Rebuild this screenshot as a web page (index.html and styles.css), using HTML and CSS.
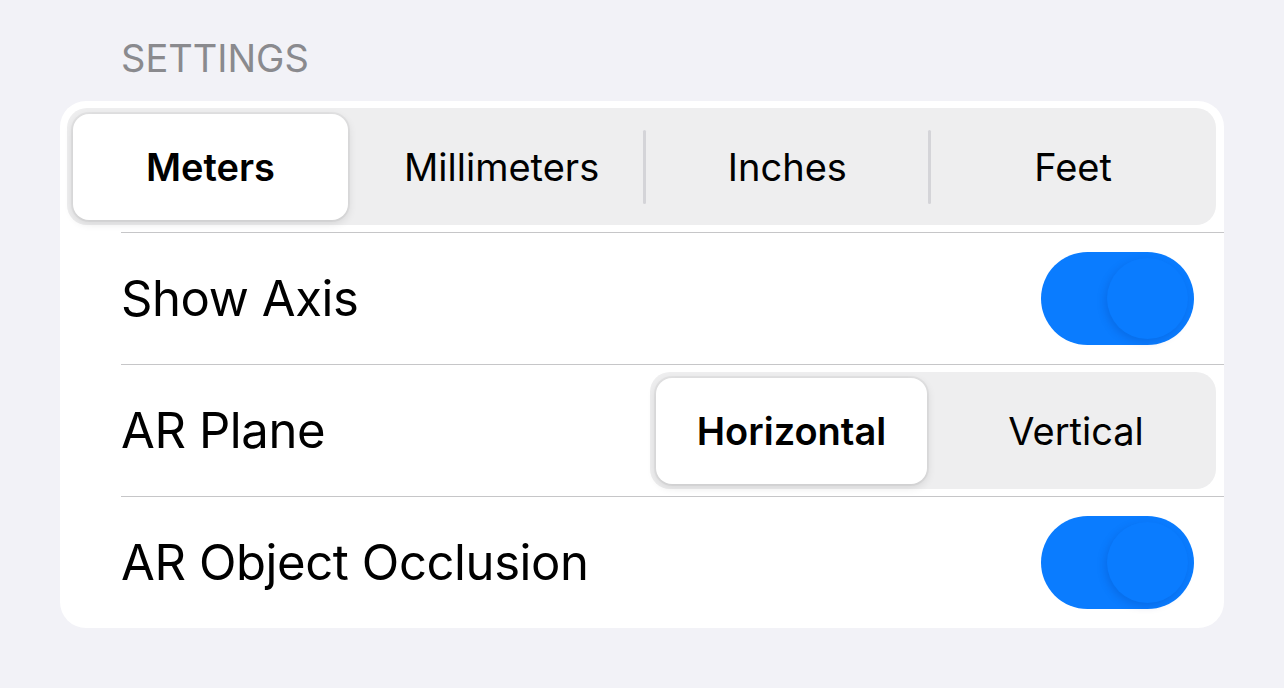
FILE: index.html
```html
<!DOCTYPE html>
<html>
  <head>
    <meta charset="UTF-8" />
    <title>Settings</title>
    <link rel="stylesheet" href="styles.css">
  </head>
  <body>
    <div class="page">
      <div class="section-title">SETTINGS</div>
      <div class="card">
        <div class="row row-segment">
          <div class="segmented units">
            <div class="segment selected">Meters</div>
            <div class="segment">Millimeters</div>
            <div class="segment divided">Inches</div>
            <div class="segment divided">Feet</div>
          </div>
        </div>
        <div class="row">
          <div class="label">Show Axis</div>
          <div class="toggle"><div class="knob"></div></div>
        </div>
        <div class="row">
          <div class="label">AR Plane</div>
          <div class="segmented plane">
            <div class="segment selected">Horizontal</div>
            <div class="segment">Vertical</div>
          </div>
        </div>
        <div class="row">
          <div class="label">AR Object Occlusion</div>
          <div class="toggle"><div class="knob"></div></div>
        </div>
      </div>
    </div>
  </body>
</html>
```

FILE: styles.css
```css
body {
  margin: 0;
  background-color: #f2f2f7;
  font-family: Inter, "Noto Sans", sans-serif;
  color: #000;
}

.page {
  padding: 36px 60px 0 60px;
}

.section-title {
  font-size: 38px;
  color: #8a8a8e;
  padding-left: 61px;
  height: 65px;
  line-height: 44px;
}

.card {
  background-color: #fff;
  border-radius: 26px;
  overflow: hidden;
}

.row {
  height: 132px;
  display: flex;
  align-items: center;
  justify-content: space-between;
  margin-left: 61px;
  padding-right: 30px;
  border-top: 1px solid #c6c6c8;
  box-sizing: border-box;
}

.row-segment {
  height: 131px;
  margin-left: 0;
  padding: 7px 8px 7px 7px;
  border-top: none;
  align-items: flex-start;
}

.label {
  font-size: 49px;
  letter-spacing: -0.4px;
}

.segmented {
  display: grid;
  grid-auto-flow: column;
  grid-auto-columns: 1fr;
  background-color: #eeeeef;
  border-radius: 20px;
  padding: 6px 0 5px 6px;
  box-sizing: border-box;
  height: 117px;
}

.segmented.units {
  width: 100%;
}

.segmented.plane {
  width: 566px;
  margin-right: -22px;
}

.segment {
  display: flex;
  align-items: center;
  justify-content: center;
  font-size: 38px;
  font-weight: 400;
  position: relative;
  border-radius: 16px;
}

.segment.divided::before {
  content: "";
  position: absolute;
  left: -2px;
  top: 16px;
  bottom: 16px;
  width: 3px;
  background-color: #d4d4d8;
  border-radius: 2px;
}

.segment.selected {
  background-color: #fff;
  font-weight: 600;
  margin-right: 11px;
  box-shadow: 0 3px 10px rgba(0, 0, 0, 0.12), 0 0 0 2px rgba(0, 0, 0, 0.04);
}

.plane .segment.selected {
  margin-right: 9px;
}

.toggle {
  width: 153px;
  height: 93px;
  border-radius: 47px;
  background-color: #0a7cff;
  position: relative;
}

.knob {
  position: absolute;
  right: 6px;
  top: 6px;
  width: 81px;
  height: 81px;
  border-radius: 50%;
  background-color: #0a7cff;
  box-shadow: -2px 3px 8px rgba(0, 40, 120, 0.18);
}
```
